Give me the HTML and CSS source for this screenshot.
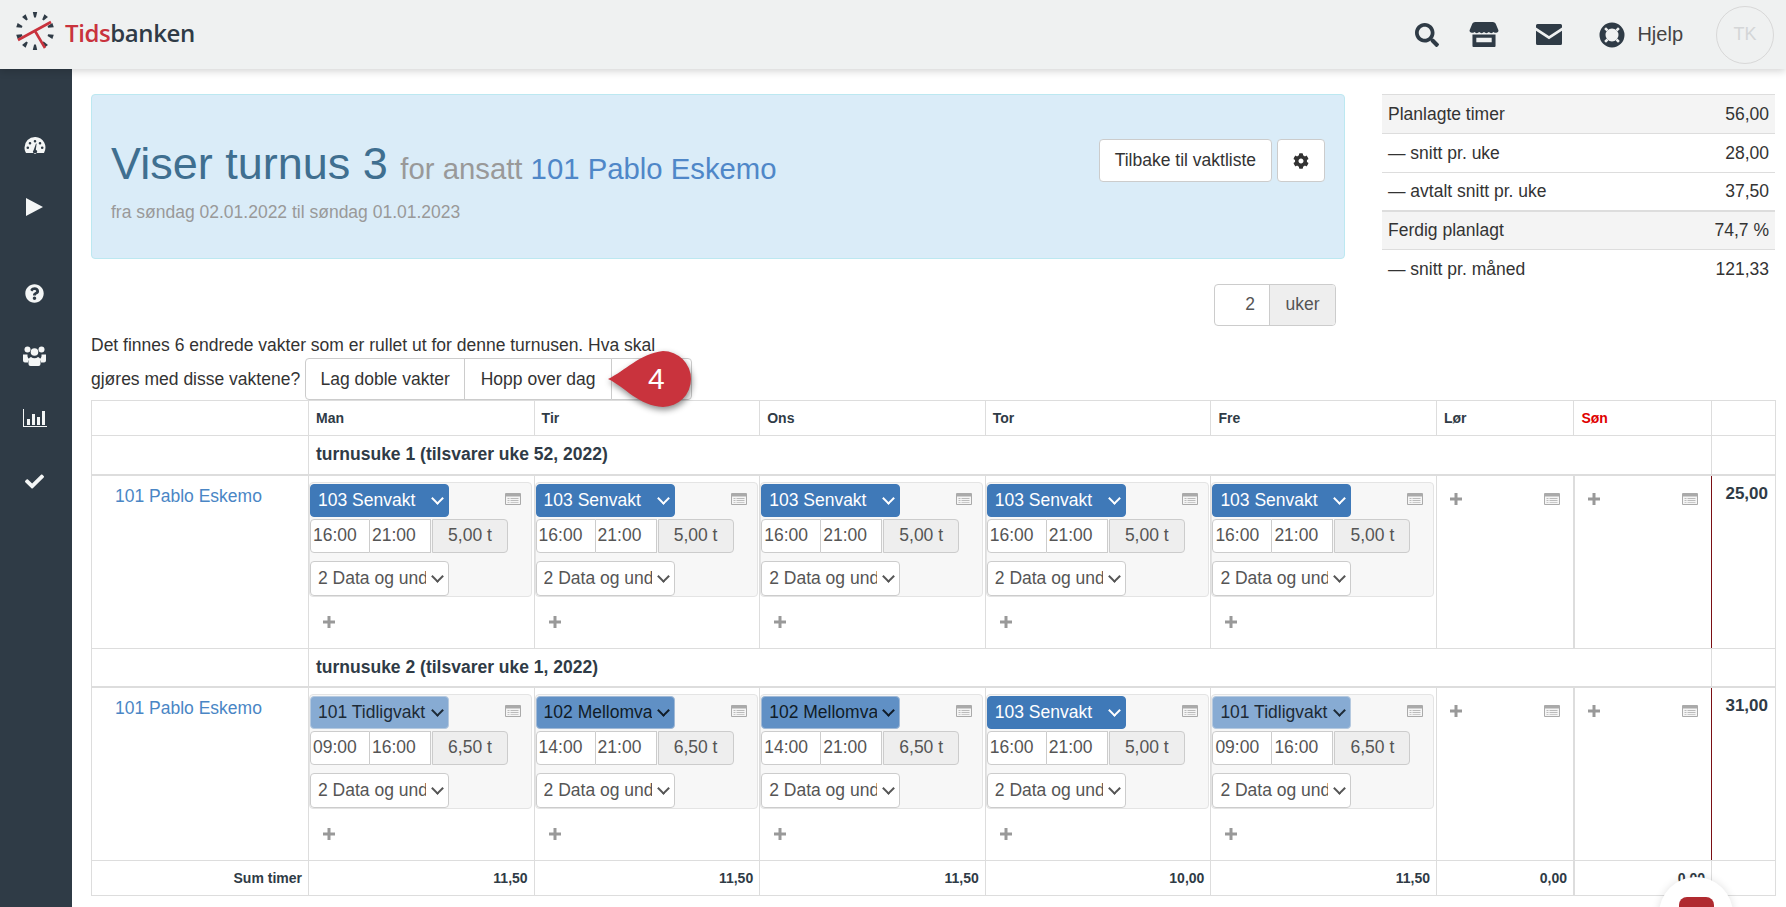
FILE: index.html
```html
<!DOCTYPE html>
<html lang="no">
<head>
<meta charset="utf-8">
<title>Tidsbanken</title>
<link rel="stylesheet" href="styles.css">
</head>
<body>
<header class="topbar">
  <div class="brand">
    <svg class="logo" viewBox="0 0 40 40" width="40" height="40">
      <g fill="#2f3b46">
        <path d="M17.800 1h4.400l-1.300 5.500h-1.800z"/>
        <path d="M17.800 1h4.400l-1.300 5.500h-1.800z" transform="rotate(36 20 20)"/>
        <path d="M17.800 1h4.400l-1.300 5.500h-1.800z" transform="rotate(72 20 20)"/>
        <path d="M17.800 1h4.400l-1.300 5.500h-1.800z" transform="rotate(108 20 20)"/>
        <path d="M17.800 1h4.400l-1.300 5.500h-1.800z" transform="rotate(144 20 20)"/>
        <path d="M17.800 1h4.400l-1.300 5.500h-1.800z" transform="rotate(180 20 20)"/>
        <path d="M17.800 1h4.400l-1.300 5.500h-1.800z" transform="rotate(216 20 20)"/>
        <path d="M17.800 1h4.400l-1.300 5.500h-1.800z" transform="rotate(252 20 20)"/>
        <path d="M17.800 1h4.400l-1.300 5.500h-1.800z" transform="rotate(288 20 20)"/>
        <path d="M17.800 1h4.400l-1.300 5.500h-1.800z" transform="rotate(324 20 20)"/>
      </g>
      <path d="M3 29 36 11M20 20l10 17" stroke="#c9333d" stroke-width="2.600" fill="none"/>
    </svg>
    <span class="wordmark"><span class="wm-red">Tids</span>banken</span>
  </div>
  <nav class="top-icons">
    <svg class="ti ti-search" viewBox="0 0 512 512"><path d="M505 442.7L405.3 343c-4.5-4.5-10.6-7-17-7H372c27.6-35.3 44-79.7 44-128C416 93.1 322.9 0 208 0S0 93.1 0 208s93.1 208 208 208c48.3 0 92.7-16.4 128-44v16.3c0 6.4 2.5 12.5 7 17l99.7 99.7c9.4 9.4 24.6 9.4 33.9 0l28.3-28.3c9.4-9.4 9.4-24.6.1-34zM208 336c-70.7 0-128-57.2-128-128 0-70.7 57.2-128 128-128 70.7 0 128 57.2 128 128 0 70.7-57.2 128-128 128z"/></svg>
    <svg class="ti ti-store" viewBox="0 0 30 26"><path d="M6 0h18c2 0 3 1 3.500 2.500L30 8.500a2.400 2.400 0 0 1-2.500 2.800 3.300 3.300 0 0 1-2.500-.9 3.600 3.600 0 0 1-5 0 3.600 3.600 0 0 1-5 0 3.600 3.600 0 0 1-5 0 3.600 3.600 0 0 1-5 0 3.300 3.300 0 0 1-2.500.9A2.400 2.400 0 0 1 0 8.500l2.500-6C3 1 4 0 6 0z"/><path d="M3 13h24v12a1 1 0 0 1-1 1H4a1 1 0 0 1-1-1zm4 3.500V21h16v-4.500z"/></svg>
    <svg class="ti ti-mail" viewBox="0 0 26 21"><path d="M1.500 0h23A1.500 1.500 0 0 1 26 1.500v2L13 12 0 3.500v-2A1.500 1.500 0 0 1 1.500 0zM0 6.800l13 8.400 13-8.400v12.700a1.500 1.500 0 0 1-1.500 1.500h-23A1.500 1.500 0 0 1 0 19.500z"/></svg>
    <span class="help">
      <svg class="ti ti-ring" viewBox="0 0 26 26"><circle cx="13" cy="13" r="9.500" fill="#eff1f1" stroke="#2f3b46" stroke-width="6"/><path d="M8.500 8.500 6.100 6.100M17.500 8.500l2.400-2.400M8.500 17.500l-2.400 2.400M17.500 17.500l2.400 2.400" stroke="#eff1f1" stroke-width="2.500" fill="none"/></svg>
      <span class="help-label">Hjelp</span>
    </span>
    <span class="avatar">TK</span>
  </nav>
</header>

<div class="shell">
  <aside class="sidebar">
    <svg class="si si-a" viewBox="0 0 22 18"><path fill-rule="evenodd" d="M11 1A10.500 10.500 0 0 0 .5 11.500c0 2 .5 3.800 1.400 5.200.2.200.4.300.7.300h16.800c.3 0 .5-.1.700-.3a10.500 10.500 0 0 0-8.600-15.700zM11 4a1.300 1.300 0 1 1 0 2.600A1.300 1.300 0 0 1 11 4zM6 6a1.300 1.300 0 1 1 0 2.600A1.300 1.300 0 0 1 6 6zm10 0a1.300 1.300 0 1 1 0 2.600A1.300 1.300 0 0 1 16 6zM3.800 10.500a1.300 1.300 0 1 1 0 2.600 1.300 1.300 0 0 1 0-2.600zm14.400 0a1.300 1.300 0 1 1 0 2.600 1.300 1.300 0 0 1 0-2.600zM12 7.500l.6.200-.8 6.100a2 2 0 1 1-2.200.5z"/></svg>
    <svg class="si si-b" viewBox="0 0 17 18"><path d="M0 0 17 9 0 18z"/></svg>
    <svg class="si si-c" viewBox="0 0 512 512"><path d="M504 256c0 136.997-111.043 248-248 248S8 392.997 8 256C8 119.083 119.043 8 256 8s248 111.083 248 248zM262.655 90c-54.497 0-89.255 22.957-116.549 63.758-3.536 5.286-2.353 12.415 2.715 16.258l34.699 26.31c5.205 3.947 12.621 3.008 16.665-2.122 17.864-22.658 30.113-35.797 57.303-35.797 20.429 0 45.698 13.148 45.698 32.958 0 14.976-12.363 22.667-32.534 33.976C247.128 238.528 216 254.941 216 296v4c0 6.627 5.373 12 12 12h56c6.627 0 12-5.373 12-12v-1.333c0-28.462 83.186-29.647 83.186-106.667 0-58.002-60.165-102-116.531-102zM256 338c-25.365 0-46 20.635-46 46 0 25.364 20.635 46 46 46s46-20.636 46-46c0-25.365-20.635-46-46-46z"/></svg>
    <svg class="si si-d" viewBox="0 0 23 20"><circle cx="4.500" cy="3.500" r="3"/><circle cx="18.500" cy="3.500" r="3"/><circle cx="11.500" cy="6" r="3.800"/><path d="M0 8.500h4.500c-.5 2.500 1 4.300 2.500 4.700-1.200.7-2 1.800-2 3.300H2a2 2 0 0 1-2-2zM23 8.500h-4.500c.5 2.500-1 4.300-2.500 4.700 1.200.7 2 1.800 2 3.300h3a2 2 0 0 0 2-2z"/><path d="M8 11c1 .8 2.200 1.200 3.500 1.200S14 11.800 15 11c1.500.5 2.500 1.800 2.500 3.500V18a2 2 0 0 1-2 2h-8a2 2 0 0 1-2-2v-3.500C5.500 12.800 6.500 11.500 8 11z"/></svg>
    <svg class="si si-e" viewBox="0 0 24 18"><path d="M0 0h1v17h23v1H0z"/><path d="M4 10h3v6H4zM9 5h3v11H9zM14 8h3v8h-3zM19 2h3v14h-3z"/></svg>
    <svg class="si si-f" viewBox="0 0 512 512"><path d="M173.898 439.404l-166.4-166.4c-9.997-9.997-9.997-26.206 0-36.204l36.203-36.204c9.997-9.998 26.207-9.998 36.204 0L192 312.69 432.095 72.596c9.997-9.997 26.207-9.997 36.204 0l36.203 36.204c9.997 9.997 9.997 26.206 0 36.204l-294.4 294.401c-9.998 9.997-26.207 9.997-36.204-.001z"/></svg>
  </aside>

  <main class="content">
    <section class="top-row">
      <div class="top-left">
        <div class="hero">
          <div class="hero-text">
            <h1 class="hero-title">Viser turnus 3 <small class="hero-sub">for ansatt <a class="hero-link">101 Pablo Eskemo</a></small></h1>
            <p class="hero-dates">fra søndag 02.01.2022 til søndag 01.01.2023</p>
          </div>
          <div class="hero-actions">
            <button class="btn">Tilbake til vaktliste</button>
            <button class="btn btn-gear"><svg class="gear" viewBox="0 0 512 512"><path d="M487.4 315.7l-42.6-24.6c4.3-23.2 4.3-47 0-70.2l42.6-24.6c4.9-2.8 7.1-8.6 5.500-14-11.100-35.600-30-67.800-54.700-94.600-3.800-4.100-10-5.100-14.800-2.300L380.800 110c-17.900-15.400-38.500-27.300-60.800-35.100V25.800c0-5.600-3.900-10.500-9.400-11.700-36.700-8.200-74.300-7.800-109.200 0-5.500 1.200-9.400 6.100-9.400 11.700V75c-22.200 7.900-42.800 19.800-60.800 35.100L88.700 85.500c-4.900-2.800-11-1.900-14.800 2.300-24.700 26.700-43.600 58.900-54.700 94.600-1.700 5.400.6 11.200 5.500 14L67.300 221c-4.300 23.200-4.300 47 0 70.200l-42.600 24.600c-4.900 2.800-7.100 8.600-5.500 14 11.100 35.600 30 67.800 54.700 94.600 3.800 4.100 10 5.100 14.800 2.300l42.600-24.600c17.900 15.400 38.500 27.300 60.800 35.100v49.200c0 5.600 3.900 10.500 9.400 11.700 36.700 8.200 74.300 7.800 109.200 0 5.500-1.200 9.400-6.100 9.400-11.700v-49.200c22.200-7.900 42.800-19.800 60.800-35.100l42.600 24.600c4.900 2.800 11 1.900 14.800-2.300 24.700-26.700 43.600-58.900 54.700-94.600 1.500-5.500-.7-11.300-5.600-14.100zM256 336c-44.100 0-80-35.900-80-80s35.900-80 80-80 80 35.900 80 80-35.900 80-80 80z"/></svg></button>
          </div>
        </div>
        <div class="weeks-row">
          <div class="weeks"><span class="weeks-val">2</span><span class="weeks-unit">uker</span></div>
        </div>
        <div class="notice">
          <p class="notice-line">Det finnes 6 endrede vakter som er rullet ut for denne turnusen. Hva skal</p>
          <div class="notice-ask">
            <span>gjøres med disse vaktene?</span>
            <div class="btn-group">
              <button class="gbtn gbtn-1">Lag doble vakter</button>
              <button class="gbtn gbtn-2">Hopp over dag</button>
              <button class="gbtn gbtn-3"></button>
            </div>
          </div>
        </div>
      </div>
      <table class="stats">
        <tr class="odd"><td>Planlagte timer</td><td class="num">56,00</td></tr>
        <tr><td>— snitt pr. uke</td><td class="num">28,00</td></tr>
        <tr class="third"><td>— avtalt snitt pr. uke</td><td class="num">37,50</td></tr>
        <tr class="odd heavy"><td>Ferdig planlagt</td><td class="num">74,7 %</td></tr>
        <tr><td>— snitt pr. måned</td><td class="num">121,33</td></tr>
      </table>
    </section>

    <table class="plan">
      <colgroup>
        <col class="c-name"><col class="c-day"><col class="c-day"><col class="c-day"><col class="c-day"><col class="c-day"><col class="c-end"><col class="c-end"><col class="c-sum">
      </colgroup>
      <thead>
        <tr class="r-head"><th></th><th>Man</th><th>Tir</th><th>Ons</th><th>Tor</th><th>Fre</th><th>Lør</th><th class="sun">Søn</th><th></th></tr>
      </thead>
      <tbody>
        <tr class="r-week"><td></td><td colspan="7" class="week-title">turnusuke 1 (tilsvarer uke 52, 2022)</td><td></td></tr>
        <tr class="r-person">
          <td class="person"><a>101 Pablo Eskemo</a></td>
          <td><div class="shift"><div class="shift-top"><div class="sel sel-s">103 Senvakt</div><svg class="li" viewBox="0 0 16 12"><use href="#list"/></svg></div><div class="times"><span class="tm tm1">16:00</span><span class="tm tm2">21:00</span><span class="dur">5,00 t</span></div><div class="sel sel-d"><span>2 Data og und</span></div></div><div class="plus-row"><svg class="plus" viewBox="0 0 12 12"><use href="#plus"/></svg></div></td>
          <td><div class="shift"><div class="shift-top"><div class="sel sel-s">103 Senvakt</div><svg class="li" viewBox="0 0 16 12"><use href="#list"/></svg></div><div class="times"><span class="tm tm1">16:00</span><span class="tm tm2">21:00</span><span class="dur">5,00 t</span></div><div class="sel sel-d"><span>2 Data og und</span></div></div><div class="plus-row"><svg class="plus" viewBox="0 0 12 12"><use href="#plus"/></svg></div></td>
          <td><div class="shift"><div class="shift-top"><div class="sel sel-s">103 Senvakt</div><svg class="li" viewBox="0 0 16 12"><use href="#list"/></svg></div><div class="times"><span class="tm tm1">16:00</span><span class="tm tm2">21:00</span><span class="dur">5,00 t</span></div><div class="sel sel-d"><span>2 Data og und</span></div></div><div class="plus-row"><svg class="plus" viewBox="0 0 12 12"><use href="#plus"/></svg></div></td>
          <td><div class="shift"><div class="shift-top"><div class="sel sel-s">103 Senvakt</div><svg class="li" viewBox="0 0 16 12"><use href="#list"/></svg></div><div class="times"><span class="tm tm1">16:00</span><span class="tm tm2">21:00</span><span class="dur">5,00 t</span></div><div class="sel sel-d"><span>2 Data og und</span></div></div><div class="plus-row"><svg class="plus" viewBox="0 0 12 12"><use href="#plus"/></svg></div></td>
          <td><div class="shift"><div class="shift-top"><div class="sel sel-s">103 Senvakt</div><svg class="li" viewBox="0 0 16 12"><use href="#list"/></svg></div><div class="times"><span class="tm tm1">16:00</span><span class="tm tm2">21:00</span><span class="dur">5,00 t</span></div><div class="sel sel-d"><span>2 Data og und</span></div></div><div class="plus-row"><svg class="plus" viewBox="0 0 12 12"><use href="#plus"/></svg></div></td>
          <td class="empty"><div class="empty-top"><svg class="plus" viewBox="0 0 12 12"><use href="#plus"/></svg><svg class="li" viewBox="0 0 16 12"><use href="#list"/></svg></div></td>
          <td class="empty sun-cell"><div class="empty-top"><svg class="plus" viewBox="0 0 12 12"><use href="#plus"/></svg><svg class="li" viewBox="0 0 16 12"><use href="#list"/></svg></div></td>
          <td class="total">25,00</td>
        </tr>
        <tr class="r-week"><td></td><td colspan="7" class="week-title">turnusuke 2 (tilsvarer uke 1, 2022)</td><td></td></tr>
        <tr class="r-person">
          <td class="person"><a>101 Pablo Eskemo</a></td>
          <td><div class="shift"><div class="shift-top"><div class="sel sel-t">101 Tidligvakt</div><svg class="li" viewBox="0 0 16 12"><use href="#list"/></svg></div><div class="times"><span class="tm tm1">09:00</span><span class="tm tm2">16:00</span><span class="dur">6,50 t</span></div><div class="sel sel-d"><span>2 Data og und</span></div></div><div class="plus-row"><svg class="plus" viewBox="0 0 12 12"><use href="#plus"/></svg></div></td>
          <td><div class="shift"><div class="shift-top"><div class="sel sel-m"><span class="sel-clip">102 Mellomvakt</span></div><svg class="li" viewBox="0 0 16 12"><use href="#list"/></svg></div><div class="times"><span class="tm tm1">14:00</span><span class="tm tm2">21:00</span><span class="dur">6,50 t</span></div><div class="sel sel-d"><span>2 Data og und</span></div></div><div class="plus-row"><svg class="plus" viewBox="0 0 12 12"><use href="#plus"/></svg></div></td>
          <td><div class="shift"><div class="shift-top"><div class="sel sel-m"><span class="sel-clip">102 Mellomvakt</span></div><svg class="li" viewBox="0 0 16 12"><use href="#list"/></svg></div><div class="times"><span class="tm tm1">14:00</span><span class="tm tm2">21:00</span><span class="dur">6,50 t</span></div><div class="sel sel-d"><span>2 Data og und</span></div></div><div class="plus-row"><svg class="plus" viewBox="0 0 12 12"><use href="#plus"/></svg></div></td>
          <td><div class="shift"><div class="shift-top"><div class="sel sel-s">103 Senvakt</div><svg class="li" viewBox="0 0 16 12"><use href="#list"/></svg></div><div class="times"><span class="tm tm1">16:00</span><span class="tm tm2">21:00</span><span class="dur">5,00 t</span></div><div class="sel sel-d"><span>2 Data og und</span></div></div><div class="plus-row"><svg class="plus" viewBox="0 0 12 12"><use href="#plus"/></svg></div></td>
          <td><div class="shift"><div class="shift-top"><div class="sel sel-t">101 Tidligvakt</div><svg class="li" viewBox="0 0 16 12"><use href="#list"/></svg></div><div class="times"><span class="tm tm1">09:00</span><span class="tm tm2">16:00</span><span class="dur">6,50 t</span></div><div class="sel sel-d"><span>2 Data og und</span></div></div><div class="plus-row"><svg class="plus" viewBox="0 0 12 12"><use href="#plus"/></svg></div></td>
          <td class="empty"><div class="empty-top"><svg class="plus" viewBox="0 0 12 12"><use href="#plus"/></svg><svg class="li" viewBox="0 0 16 12"><use href="#list"/></svg></div></td>
          <td class="empty sun-cell"><div class="empty-top"><svg class="plus" viewBox="0 0 12 12"><use href="#plus"/></svg><svg class="li" viewBox="0 0 16 12"><use href="#list"/></svg></div></td>
          <td class="total">31,00</td>
        </tr>
        <tr class="r-sum">
          <td>Sum timer</td><td>11,50</td><td>11,50</td><td>11,50</td><td>10,00</td><td>11,50</td><td>0,00</td><td class="sun-cell">0,00</td><td></td>
        </tr>
      </tbody>
    </table>
  </main>
</div>

<div class="callout">
  <svg class="callout-shape" viewBox="0 0 84 56" width="84" height="56"><path d="M1 28C18 20 32 3 56 0a28 28 0 0 1 0 56C32 55 18 36 1 28z"/></svg>
  <span class="callout-num">4</span>
</div>
<div class="fab"><span class="fab-square"></span></div>

<svg class="defs" width="0" height="0">
  <defs>
    <g id="plus"><path fill="#999" d="M4.500 0h3v4.500H12v3H7.500V12h-3V7.500H0v-3h4.500z"/></g>
    <g id="list">
      <rect x="0" y="0" width="16" height="12" rx="1" fill="#aaa"/>
      <rect x="1" y="3.500" width="14" height="7.500" fill="#f5f5f5"/>
      <path d="M2.500 5h2v1h-2zM5.500 5h8v1h-8zM2.500 7h2v1h-2zM5.500 7h8v1h-8zM2.500 9h2v.800h-2zM5.500 9h8v.800h-8z" fill="#bbb"/>
    </g>
  </defs>
</svg>
</body>
</html>
```
FILE: styles.css
```css
* { box-sizing: border-box; }
html, body { margin: 0; padding: 0; }
body {
  font-family: "Liberation Sans", Arial, sans-serif;
  font-size: 17.5px;
  color: #333;
  background: #fff;
  width: 1786px;
  height: 907px;
  overflow: hidden;
}

/* top bar */
.topbar {
  height: 69px;
  background: #eff1f1;
  box-shadow: 0 2px 8px rgba(0,0,0,.18);
  display: flex;
  align-items: center;
  justify-content: space-between;
  padding: 0 12px 0 15px;
  position: relative;
  z-index: 2;
}
.brand { display: flex; align-items: center; gap: 10px; margin-top: -7px; }
.logo { width: 40px; height: 40px; }
.wordmark {
  font-family: "Open Sans", sans-serif;
  font-size: 24px;
  font-weight: 600;
  color: #2f3b46;
  letter-spacing: -.4px;
  margin-top: 2px;
}
.wm-red { color: #c9333d; }
.top-icons { display: flex; align-items: center; }
.ti { fill: #2f3b46; display: block; }
.ti-search { width: 24px; height: 24px; margin-right: 30px; }
.ti-store { width: 30px; height: 25px; margin-right: 37px; }
.ti-mail { width: 26px; height: 21px; margin-right: 37px; }
.help { display: flex; align-items: center; gap: 12px; margin-right: 33px; }
.ti-ring { width: 26px; height: 26px; }
.help-label { font-size: 20px; color: #444; }
.avatar {
  width: 58px; height: 58px;
  border: 1px solid #d8d8d8;
  border-radius: 50%;
  display: flex; align-items: center; justify-content: center;
  font-size: 18px;
  color: #d4d6d7;
}

/* shell */
.shell { display: flex; height: 838px; }
.sidebar {
  width: 72px;
  background: #2f3b46;
  flex: none;
  display: flex;
  flex-direction: column;
  align-items: center;
  padding: 67px 3px 0 0;
}
.si { fill: #f4f6f6; display: block; }
.si-a { width: 22px; height: 18px; }
.si-b { width: 17px; height: 18px; margin-top: 44px; }
.si-c { width: 19px; height: 19px; margin-top: 68px; }
.si-d { width: 23px; height: 20px; margin-top: 43px; }
.si-e { width: 24px; height: 18px; margin-top: 43px; }
.si-f { width: 19px; height: 19px; margin-top: 45px; }

.content { flex: 1; padding: 25px 11px 0 19px; min-width: 0; }
.top-row { display: flex; justify-content: space-between; align-items: flex-start; }
.top-left { width: 1254px; }

/* hero */
.hero {
  height: 165px;
  background: #daecf8;
  border: 1px solid #bce8f1;
  border-radius: 4px;
  display: flex;
  justify-content: space-between;
  padding: 45px 19px 0 19px;
}
.hero-title {
  margin: 0;
  font-size: 45px;
  font-weight: 400;
  line-height: 48px;
  color: #3f6f90;
}
.hero-sub { font-size: 29.3px; color: #999; }
.hero-link { color: #4f87c8; }
.hero-dates { margin: 9px 0 0; font-size: 17.5px; color: #999; }
.hero-actions { display: flex; gap: 5px; align-items: flex-start; margin-top: -1px; }
.btn {
  height: 43px;
  padding: 0 15px;
  background: #fff;
  border: 1px solid #ccc;
  border-radius: 4px;
  font: inherit;
  color: #333;
}
.btn-gear { width: 48px; padding: 0; display: flex; align-items: center; justify-content: center; }
.gear { width: 16px; height: 16px; fill: #333; }

.weeks-row { display: flex; justify-content: flex-end; padding: 25px 9px 0 0; }
.weeks {
  display: flex;
  height: 42px;
  width: 122px;
  border: 1px solid #ccc;
  border-radius: 4px;
  overflow: hidden;
}
.weeks-val { flex: 1; display: flex; align-items: center; justify-content: flex-end; padding: 0 14px 2px 0; color: #555; }
.weeks-unit { width: 66px; display: flex; align-items: center; justify-content: center; padding-bottom: 2px; background: #eee; border-left: 1px solid #ccc; color: #555; }

.notice { margin-top: 8px; }
.notice-line { margin: 0; line-height: 23px; color: #333; }
.notice-ask { display: flex; align-items: center; gap: 5px; height: 42px; margin-top: 1px; }
.btn-group { display: flex; height: 42px; }
.gbtn {
  height: 42px;
  background: #fff;
  border: 1px solid #ccc;
  font: inherit;
  color: #333;
  margin-left: -1px;
  padding: 0;
}
.gbtn-1 { width: 160px; border-radius: 4px 0 0 4px; margin-left: 0; }
.gbtn-2 { width: 148px; }
.gbtn-3 { width: 81px; border-radius: 0 4px 4px 0; }

/* stats */
.stats { width: 393px; border-collapse: collapse; border-top: 1px solid #ddd; }
.stats td { height: 39px; padding: 0 6px; border-bottom: 1px solid #ddd; color: #333; }
.stats .third td { height: 38px; }
.stats tr:last-child td { border-bottom: 0; }
.stats .odd td { background: #f4f4f4; }
.stats .heavy td { border-top: 2px solid #ddd; }
.stats .num { text-align: right; }

/* plan */
.plan {
  table-layout: fixed;
  border-collapse: collapse;
  width: 1684px;
  color: #2f3b46;
  margin-top: 0;
}
.c-name { width: 217px; }
.c-day { width: 225.6px; }
.c-end { width: 137.5px; }
.c-sum { width: 64px; }
.plan th, .plan td { border: 1px solid #ddd; }
.plan th { text-align: left; height: 35px; font-size: 14px; padding: 0 7px; }
.plan .sun { color: #e00000; }
.r-week td { height: 38px; border-bottom-width: 2px; }
.r-week:first-child td { height: 39px; }
.week-title { font-weight: 700; padding-left: 7px; font-size: 17.5px; }
.r-person td { height: 174px; vertical-align: top; padding: 0; }
.person { padding: 10px 0 0 23px !important; }
.person a { color: #4a86c5; }
.plan .sun-cell { border-left-width: 2px; }
.plan .r-person .sun-cell { border-right: 1px solid #7a0f14; }
.total { font-weight: 700; font-size: 17px; text-align: right; padding: 8px 7px 0 0 !important; }
.r-sum td { height: 35px; text-align: right; font-size: 14px; font-weight: 700; padding: 0 6px; }

.shift {
  margin: 6px 0 0 0;
  width: 223px;
  height: 115px;
  background: #f7f7f7;
  border: 1px solid #e4e4e4;
  border-radius: 4px;
  padding: 1px 1px 1px 0;
}
.shift-top { display: flex; justify-content: space-between; align-items: flex-start; padding-right: 9px; }
.li { width: 16px; height: 12px; margin-top: 9px; display: block; }
.sel {
  width: 139px;
  border-radius: 4px;
  position: relative;
  padding-left: 7px;
  white-space: nowrap;
  overflow: hidden;
}
.sel::after {
  content: "";
  position: absolute;
  right: 6px;
  top: 50%;
  width: 7px; height: 7px;
  margin-top: -6px;
  border-right: 2px solid currentColor;
  border-bottom: 2px solid currentColor;
  transform: rotate(45deg);
}
.sel-s, .sel-t, .sel-m { height: 33px; line-height: 31px; border: 1px solid #ccc; }
.sel-s { background: #3f79b8; color: #fff; border-color: #3f79b8; }
.sel-t { background: #87abd3; color: #1d2a36; border-color: #b5c9df; }
.sel-m { background: #6090c5; color: #101c28; border-color: #a0b9d6; }
.sel-clip { display: block; width: 108px; overflow: hidden; }
.times { display: flex; height: 34px; margin-top: 2px; width: 198px; }
.tm { background: #fff; border: 1px solid #ccc; display: flex; align-items: center; color: #555; }
.tm1 { width: 60px; border-radius: 4px 0 0 4px; padding-left: 2px; }
.tm2 { width: 61px; border-left: 0; padding-left: 2px; }
.dur {
  flex: 1;
  margin-left: 1px;
  background: #eee;
  border: 1px solid #ccc;
  border-radius: 0 4px 4px 0;
  display: flex; align-items: center; justify-content: center;
  color: #555;
}
.sel-d {
  height: 35px;
  line-height: 33px;
  margin-top: 8px;
  background: #fff;
  border: 1px solid #ccc;
  color: #555;
}
.sel-d span { display: block; width: 108px; overflow: hidden; }
.plus-row { padding: 19px 0 0 14px; }
.plus { width: 12px; height: 12px; display: block; }
.empty-top { display: flex; justify-content: space-between; padding: 17px 13px 0 13px; }
.empty-top .li { margin-top: 0; }

/* overlays */
.callout {
  position: absolute;
  left: 607px;
  top: 351px;
  width: 84px;
  height: 56px;
  z-index: 3;
}
.callout-shape { fill: #c9333d; filter: drop-shadow(1px 3px 3px rgba(0,0,0,.45)); display: block; overflow: visible; }
.callout-num {
  position: absolute;
  left: 41px;
  top: 11px;
  font-size: 30px;
  line-height: 34px;
  color: #fff;
}
.fab {
  position: absolute;
  left: 1659px;
  top: 877px;
  width: 74px;
  height: 74px;
  border-radius: 50%;
  background: #fff;
  box-shadow: 0 0 8px rgba(0,0,0,.12);
  z-index: 3;
  display: flex;
  justify-content: center;
  padding-top: 20px;
}
.fab-square { display: block; width: 35px; height: 35px; background: #b02a30; border-radius: 8px; }
.defs { position: absolute; }
```
